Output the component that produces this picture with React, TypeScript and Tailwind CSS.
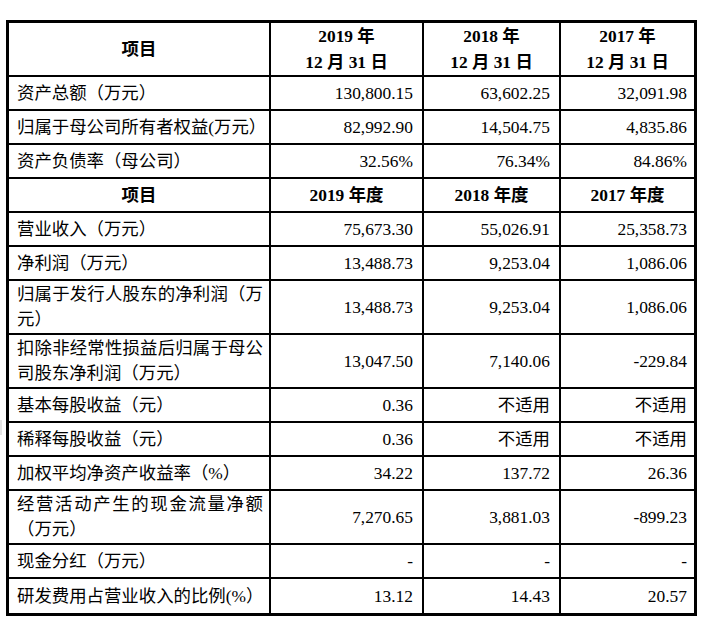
import React from "react";

type Row = { label: string; v: [string, string, string]; h: "s" | "d" };

const top: Row[] = [
  { label: "资产总额（万元）", v: ["130,800.15", "63,602.25", "32,091.98"], h: "s" },
  { label: "归属于母公司所有者权益(万元）", v: ["82,992.90", "14,504.75", "4,835.86"], h: "s" },
  { label: "资产负债率（母公司）", v: ["32.56%", "76.34%", "84.86%"], h: "s" },
];

const bottom: Row[] = [
  { label: "营业收入（万元）", v: ["75,673.30", "55,026.91", "25,358.73"], h: "s" },
  { label: "净利润（万元）", v: ["13,488.73", "9,253.04", "1,086.06"], h: "s" },
  { label: "归属于发行人股东的净利润（万元）", v: ["13,488.73", "9,253.04", "1,086.06"], h: "d" },
  { label: "扣除非经常性损益后归属于母公司股东净利润（万元）", v: ["13,047.50", "7,140.06", "-229.84"], h: "d" },
  { label: "基本每股收益（元）", v: ["0.36", "不适用", "不适用"], h: "s" },
  { label: "稀释每股收益（元）", v: ["0.36", "不适用", "不适用"], h: "s" },
  { label: "加权平均净资产收益率（%）", v: ["34.22", "137.72", "26.36"], h: "s" },
  { label: "经营活动产生的现金流量净额（万元）", v: ["7,270.65", "3,881.03", "-899.23"], h: "d" },
  { label: "现金分红（万元）", v: ["-", "-", "-"], h: "s" },
  { label: "研发费用占营业收入的比例(%）", v: ["13.12", "14.43", "20.57"], h: "s" },
];

const font = { fontFamily: '"Liberation Serif", "Noto Sans CJK SC", serif' };

function DataRow({ r, last }: { r: Row; last?: boolean }) {
  const hb = r.h === "d" ? "h-[54px]" : "h-[34px]";
  const bb = last ? "" : "border-b-2 border-black";
  return (
    <div className={`flex ${hb} ${bb}`}>
      <div className="w-[262px] shrink-0 border-r-2 border-black pl-2 pr-[6px] flex items-center">
        <div className="w-full text-justify leading-[25px]">{r.label}</div>
      </div>
      <div className="w-[153px] shrink-0 border-r-2 border-black pr-[9px] flex items-center justify-end">{r.v[0]}</div>
      <div className="w-[137px] shrink-0 border-r-2 border-black pr-[9px] flex items-center justify-end">{r.v[1]}</div>
      <div className="w-[133px] shrink-0 pr-[7px] flex items-center justify-end">{r.v[2]}</div>
    </div>
  );
}

export default function App() {
  return (
    <div className="w-[712px] h-[625px] bg-white relative text-black" style={font}>
      <div className="absolute left-0 top-[420px] w-[2px] h-[15px] bg-[#e4e4e4]" />
      <div className="pt-[20px] pl-[6px]">
        <div className="w-[691px] border-[3px] border-black text-[17.4px] leading-[25px]">
          <div className="flex h-[54px] border-b-2 border-black font-bold leading-[26px]">
            <div className="w-[262px] shrink-0 border-r-2 border-black flex items-center justify-center">项目</div>
            <div className="w-[153px] shrink-0 border-r-2 border-black flex flex-col items-center justify-center">
              <div>2019 年</div>
              <div>12 月 31 日</div>
            </div>
            <div className="w-[137px] shrink-0 border-r-2 border-black flex flex-col items-center justify-center">
              <div>2018 年</div>
              <div>12 月 31 日</div>
            </div>
            <div className="w-[133px] shrink-0 flex flex-col items-center justify-center">
              <div>2017 年</div>
              <div>12 月 31 日</div>
            </div>
          </div>
          {top.map((r, i) => (
            <DataRow key={"t" + i} r={r} />
          ))}
          <div className="flex h-[34px] border-b-2 border-black font-bold">
            <div className="w-[262px] shrink-0 border-r-2 border-black flex items-center justify-center">项目</div>
            <div className="w-[153px] shrink-0 border-r-2 border-black flex items-center justify-center">2019 年度</div>
            <div className="w-[137px] shrink-0 border-r-2 border-black flex items-center justify-center">2018 年度</div>
            <div className="w-[133px] shrink-0 flex items-center justify-center">2017 年度</div>
          </div>
          {bottom.map((r, i) => (
            <DataRow key={"b" + i} r={r} last={i === bottom.length - 1} />
          ))}
        </div>
      </div>
    </div>
  );
}
